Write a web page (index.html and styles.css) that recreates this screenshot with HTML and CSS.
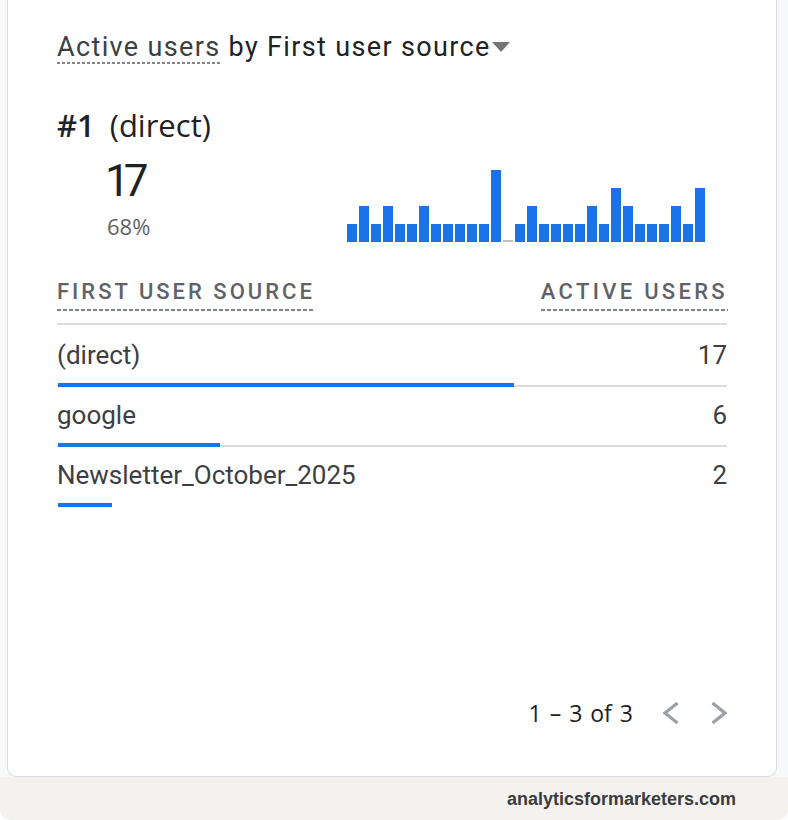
FILE: index.html
```html
<!DOCTYPE html>
<html>
<head>
<meta charset="utf-8">
<link rel="stylesheet" href="styles.css">
</head>
<body>
<div class="page">
  <div class="card">
    <div class="title">
      <span class="metric">Active users</span> by <span class="dim">First user source</span><span class="caret"></span>
    </div>
    <div class="rank"><span class="num">#1</span><span class="name">(direct)</span></div>
    <div class="top-row">
      <div class="stats">
        <div class="big">17</div>
        <div class="pct">68%</div>
      </div>
      <div class="spark">
        <i class="b1"></i><i class="b2"></i><i class="b1"></i><i class="b2"></i><i class="b1"></i><i class="b1"></i><i class="b2"></i><i class="b1"></i><i class="b1"></i><i class="b1"></i><i class="b1"></i><i class="b1"></i><i class="b4"></i><i class="b0"></i><i class="b1"></i><i class="b2"></i><i class="b1"></i><i class="b1"></i><i class="b1"></i><i class="b1"></i><i class="b2"></i><i class="b1"></i><i class="b3"></i><i class="b2"></i><i class="b1"></i><i class="b1"></i><i class="b1"></i><i class="b2"></i><i class="b1"></i><i class="b3"></i>
      </div>
    </div>
    <div class="table">
      <div class="thead">
        <span class="th">First user source</span>
        <span class="th th-right">Active users</span>
      </div>
      <div class="row first">
        <div class="cells"><span>(direct)</span><span>17</span></div>
        <div class="bar" style="width:456px"></div>
      </div>
      <div class="row">
        <div class="cells"><span>google</span><span>6</span></div>
        <div class="bar" style="width:162px"></div>
      </div>
      <div class="row last">
        <div class="cells"><span>Newsletter_October_2025</span><span>2</span></div>
        <div class="bar" style="width:54px"></div>
      </div>
    </div>
    <div class="pager">
      <span class="range">1 – 3 of 3</span>
      <svg class="chev prev" width="18" height="24" viewBox="0 0 18 24"><polyline points="15.5,2 3,12 15.5,22" fill="none" stroke="#9aa0a6" stroke-width="3.2"/></svg>
      <svg class="chev next" width="18" height="24" viewBox="0 0 18 24"><polyline points="2.5,2 15,12 2.5,22" fill="none" stroke="#9aa0a6" stroke-width="3.2"/></svg>
    </div>
  </div>
</div>
<div class="footer">analyticsformarketers.com</div>
</body>
</html>
```
FILE: styles.css
```css
html, body {
  margin: 0;
  padding: 0;
  background: #ffffff;
}
body {
  width: 788px;
  height: 820px;
  overflow: hidden;
  font-family: "Open Sans", Roboto, sans-serif;
  color: #202124;
}
.page {
  background: #f8f9fa;
  padding: 0 11px 0 7px;
  height: 777px;
}
.card {
  box-sizing: border-box;
  height: 777px;
  background: #fff;
  border: 1px solid #dadce0;
  border-top: none;
  border-radius: 0 0 9px 9px;
  padding: 30px 49px 0 49px;
  display: flex;
  flex-direction: column;
}
.title {
  font-family: Roboto, sans-serif;
  font-size: 27px;
  letter-spacing: 1.35px;
  line-height: 34px;
  color: #202124;
  display: flex;
  align-items: center;
  white-space: pre;
}
.metric {
  color: #3c4043;
  background-image: linear-gradient(to right, #80868b 60%, transparent 60%);
  background-size: 5px 2px;
  background-repeat: repeat-x;
  background-position: 0 100%;
}
.caret {
  width: 0;
  height: 0;
  border-left: 9px solid transparent;
  border-right: 9px solid transparent;
  border-top: 10px solid #757575;
  margin-left: 1px;
  margin-top: 0px;
}
.rank {
  margin-top: 41px;
  font-size: 31px;
  line-height: 40px;
  color: #202124;
  display: flex;
  gap: 15px;
}
.rank .num {
  font-weight: 600;
}
.top-row {
  display: flex;
  align-items: flex-start;
  justify-content: space-between;
  margin-top: 11px;
}
.stats {
  padding-left: 46px;
}
.big {
  font-family: Roboto, sans-serif;
  font-size: 44px;
  letter-spacing: -6px;
  line-height: 50px;
  padding-left: 2px;
  color: #202124;
}
.pct {
  margin-top: 6px;
  padding-left: 4px;
  font-size: 22px;
  line-height: 28px;
  color: #5f6368;
}
.spark {
  display: flex;
  align-items: flex-end;
  gap: 2px;
  height: 72px;
  margin-top: 14px;
  margin-right: 22px;
}
.spark i {
  display: block;
  width: 10px;
  background: #1a73e8;
}
.spark .b0 { height: 2px; background: #bdc1c6; }
.spark .b1 { height: 18px; }
.spark .b2 { height: 36px; }
.spark .b3 { height: 54px; }
.spark .b4 { height: 72px; }
.table {
  margin-top: 37px;
  font-family: Roboto, sans-serif;
}
.thead {
  display: flex;
  justify-content: space-between;
  align-items: flex-end;
  border-bottom: 2px solid #dadce0;
  padding-bottom: 12px;
}
.th {
  text-transform: uppercase;
  font-size: 22px;
  font-weight: 500;
  letter-spacing: 3px;
  color: #5f6368;
  line-height: 26px;
  background-image: linear-gradient(to right, #80868b 66%, transparent 66%);
  background-size: 6px 2px;
  background-repeat: repeat-x;
  background-position: 0 100%;
  padding-bottom: 6px;
}
.th-right {
  letter-spacing: 3.3px;
  margin-right: -1px;
}
.row {
  position: relative;
  box-sizing: border-box;
  height: 60px;
  border-bottom: 2px solid #dadce0;
}
.row.first {
  margin-top: 2px;
}
.row.last {
  border-bottom-color: transparent;
}
.cells {
  display: flex;
  justify-content: space-between;
  font-size: 26px;
  line-height: 30px;
  color: #3c4043;
  padding-top: 13px;
}
.bar {
  position: absolute;
  left: 1px;
  bottom: -2px;
  height: 4px;
  background: #1a73e8;
}
.pager {
  margin-top: auto;
  margin-bottom: 48px;
  display: flex;
  justify-content: flex-end;
  align-items: center;
  height: 30px;
}
.range {
  font-size: 23px;
  word-spacing: 2px;
  color: #202124;
  margin-right: 29px;
}
.chev.prev {
  margin-right: 30px;
}
.chev.next {
  margin-right: -1px;
}
.footer {
  box-sizing: border-box;
  height: 43px;
  background: #f3f2ee;
  border-radius: 0 0 10px 10px;
  font-family: "Liberation Sans", Arial, sans-serif;
  font-weight: bold;
  font-size: 18px;
  color: #3c3c3c;
  text-align: right;
  padding: 12px 52px 0 0;
}
```
